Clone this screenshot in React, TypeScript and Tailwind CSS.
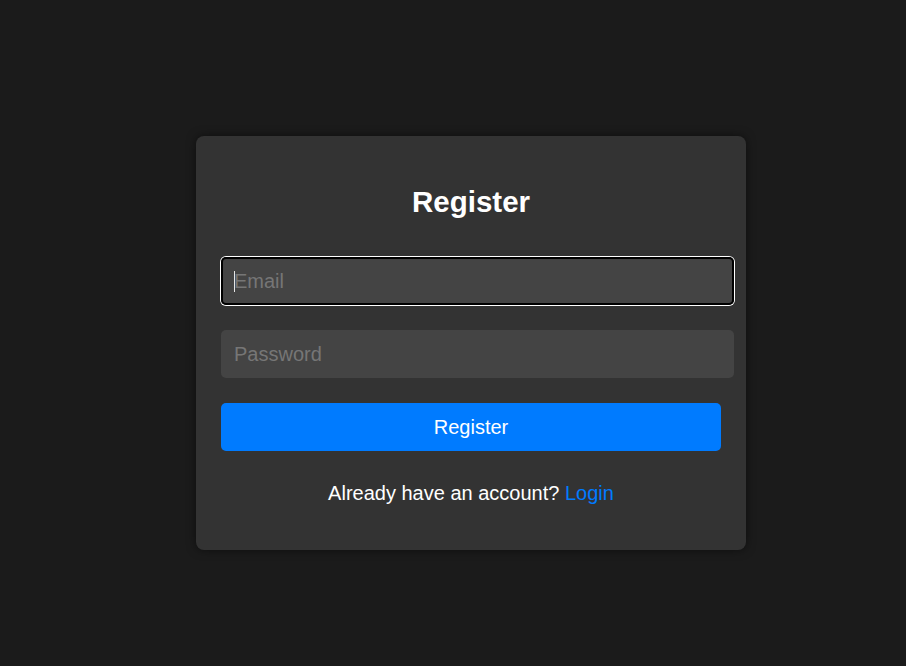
export default function App() {
    return (
        <div className="min-h-[666px] w-full bg-[#1b1b1b] pt-[136px] pl-[196px] font-['Liberation_Sans',Arial,sans-serif]">
            <div className="w-[550px] h-[414px] rounded-[8px] bg-[#333333] p-[25px] shadow-[0_0_10px_rgba(0,0,0,0.5)]">
                <h2 className="mt-[24px] h-[34px] text-center text-[29.5px] leading-[34px] font-bold text-white">Register</h2>
                <form className="mt-[38px] flex flex-col" onSubmit={(e) => e.preventDefault()}>
                    <div className="relative w-[513px] h-[48px]">
                        <input
                            type="email"
                            placeholder="Email"
                            className="w-full h-full rounded-[5px] bg-[#444444] pl-[13px] text-[20px] text-white placeholder:text-[#767676] outline-none caret-transparent shadow-[0_0_0_1px_#ffffff,inset_0_0_0_2px_#000000]"
                        />
                        <span className="absolute left-[13px] top-[14px] h-[21px] w-[1px] bg-[#e5e5e5]" />
                    </div>
                    <input
                        type="password"
                        placeholder="Password"
                        className="mt-[25px] w-[513px] h-[48px] rounded-[5px] bg-[#444444] pl-[13px] text-[20px] text-white placeholder:text-[#767676] outline-none"
                    />
                    <button
                        type="submit"
                        className="mt-[25px] w-[500px] h-[48px] rounded-[5px] bg-[#007bff] text-[20px] text-white"
                    >
                        Register
                    </button>
                </form>
                <p className="mt-[31px] text-center text-[20px] leading-[22px] text-white">
                    Already have an account? <a href="#" className="text-[#007bff]">Login</a>
                </p>
            </div>
        </div>
    );
}
